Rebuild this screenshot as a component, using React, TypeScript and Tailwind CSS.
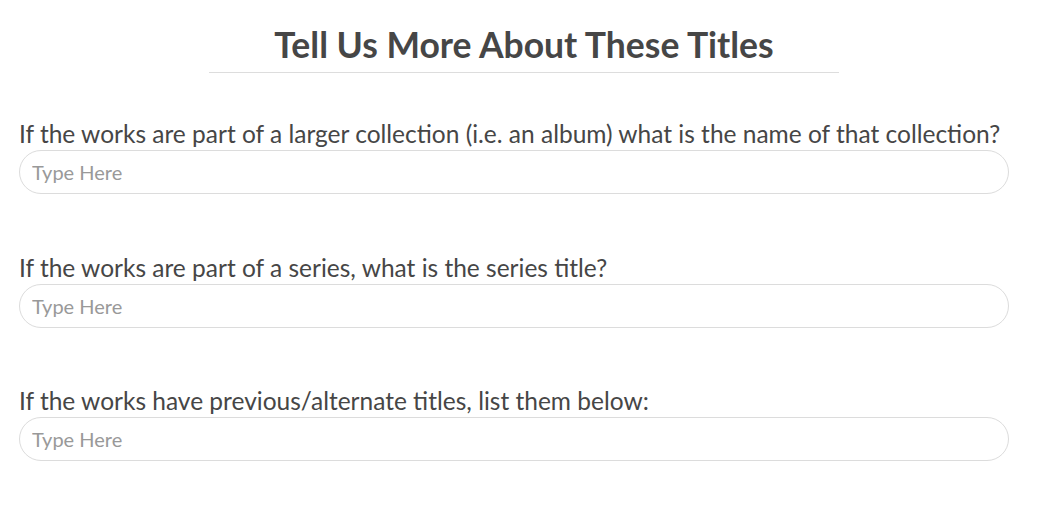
import React from "react";

const questions = [
  "If the works are part of a larger collection (i.e. an album) what is the name of that collection?",
  "If the works are part of a series, what is the series title?",
  "If the works have previous/alternate titles, list them below:",
];

export default function App() {
  return (
    <div className="min-h-[516px] w-[1048px] bg-white text-[#464646]" style={{ fontFamily: "Lato, 'Noto Sans', sans-serif" }}>
      <div className="flex flex-col items-center pt-[25px]">
        <h1 className="text-[35.5px] font-bold leading-[40px] text-[#464646]">
          Tell Us More About These Titles
        </h1>
        <div className="mt-[7px] h-px w-[630px] bg-[#dddddd]" />
      </div>
      <div className="flex flex-col gap-[58.5px] pl-[19px] pt-[46px]">
        {questions.map((q) => (
          <div key={q} className="flex flex-col">
            <label className="text-[24.5px] leading-[30px] text-[#464646]">{q}</label>
            <input
              type="text"
              placeholder="Type Here"
              className="mt-[1px] h-[44px] w-[990px] rounded-full border border-[#dcdcdc] px-[12px] text-[20px] text-[#464646] outline-none placeholder:text-[#999999]"
            />
          </div>
        ))}
      </div>
    </div>
  );
}
